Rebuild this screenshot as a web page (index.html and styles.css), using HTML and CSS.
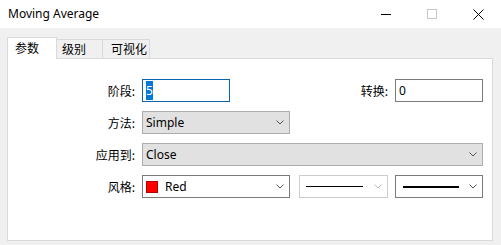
FILE: index.html
```html
<!DOCTYPE html>
<html lang="zh">
<head>
    <meta charset="UTF-8">
    <title>Moving Average</title>
    <link rel="stylesheet" href="styles.css">
</head>
<body>
    <div class="window">
        <div class="titlebar">
            <span class="title">Moving Average</span>
            <div class="caption">
                <div class="cap-btn">
                    <svg width="10" height="10" viewBox="0 0 10 10"><path d="M0 5.5H10" stroke="#000" stroke-width="1"/></svg>
                </div>
                <div class="cap-btn">
                    <svg width="10" height="10" viewBox="0 0 10 10"><rect x="0.5" y="0.5" width="9" height="9" fill="none" stroke="#c8c8c8" stroke-width="1"/></svg>
                </div>
                <div class="cap-btn">
                    <svg width="11" height="11" viewBox="0 0 11 11"><path d="M0.5 0.5L10.5 10.5M10.5 0.5L0.5 10.5" stroke="#000" stroke-width="1"/></svg>
                </div>
            </div>
        </div>

        <div class="client">
            <div class="tabs">
                <div class="tab tab-active">参数</div>
                <div class="tab tab-2">级别</div>
                <div class="tab tab-3">可视化</div>
            </div>

            <div class="panel">
                <div class="form">
                    <div class="label">阶段:</div>
                    <div class="cell">
                        <div class="edit edit-focus"><span class="sel">5</span></div>
                    </div>
                    <div class="label">转换:</div>
                    <div class="cell">
                        <div class="edit">0</div>
                    </div>

                    <div class="label">方法:</div>
                    <div class="cell">
                        <div class="combo combo-grey w-148">
                            <span>Simple</span>
                            <svg class="chev" width="8" height="5" viewBox="0 0 8 5"><path d="M0.5 0.5L4 4L7.5 0.5" fill="none" stroke="#555" stroke-width="1"/></svg>
                        </div>
                    </div>
                    <div></div>
                    <div></div>

                    <div class="label">应用到:</div>
                    <div class="cell span-3">
                        <div class="combo combo-grey">
                            <span>Close</span>
                            <svg class="chev" width="8" height="5" viewBox="0 0 8 5"><path d="M0.5 0.5L4 4L7.5 0.5" fill="none" stroke="#555" stroke-width="1"/></svg>
                        </div>
                    </div>

                    <div class="label">风格:</div>
                    <div class="cell">
                        <div class="combo w-148">
                            <span class="swatch"></span>
                            <span>Red</span>
                            <svg class="chev" width="8" height="5" viewBox="0 0 8 5"><path d="M0.5 0.5L4 4L7.5 0.5" fill="none" stroke="#555" stroke-width="1"/></svg>
                        </div>
                    </div>
                    <div class="cell">
                        <div class="combo combo-disabled w-89">
                            <span class="line line-thin"></span>
                            <svg class="chev" width="8" height="5" viewBox="0 0 8 5"><path d="M0.5 0.5L4 4L7.5 0.5" fill="none" stroke="#bbb" stroke-width="1"/></svg>
                        </div>
                    </div>
                    <div class="cell">
                        <div class="combo w-88">
                            <span class="line line-thick"></span>
                            <svg class="chev" width="8" height="5" viewBox="0 0 8 5"><path d="M0.5 0.5L4 4L7.5 0.5" fill="none" stroke="#555" stroke-width="1"/></svg>
                        </div>
                    </div>
                </div>
            </div>
        </div>
    </div>
</body>
</html>
```

FILE: styles.css
```css
body {
    margin: 0;
    width: 501px;
    height: 245px;
    overflow: hidden;
    background-color: #f0f0f0;
    font-family: "Noto Sans", "Noto Sans CJK SC", sans-serif;
    font-size: 12px;
    color: #000;
}
.window {
    display: flex;
    flex-direction: column;
    height: 245px;
}
.titlebar {
    height: 28px;
    background-color: #fff;
    display: flex;
    align-items: center;
    flex-shrink: 0;
}
.title {
    flex: 1;
    padding-left: 8px;
    font-size: 12px;
    color: #000;
    position: relative;
    top: -1px;
}
.caption {
    display: flex;
    height: 28px;
}
.cap-btn {
    width: 46px;
    height: 28px;
    display: flex;
    justify-content: center;
    align-items: center;
}
.client {
    flex: 1;
    display: flex;
    flex-direction: column;
    padding: 9px 8px 4px 7px;
}
.tabs {
    display: flex;
    height: 21px;
    align-items: flex-end;
}
.tab {
    box-sizing: border-box;
    height: 19px;
    line-height: 18px;
    border: 1px solid #d9d9d9;
    border-bottom: none;
    border-left: none;
    font-family: "Noto Sans CJK SC", sans-serif;
    font-size: 12px;
}
.tab-active {
    width: 50px;
    height: 22px;
    line-height: 19px;
    padding-left: 7px;
    margin-bottom: -1px;
    border-left: 1px solid #d9d9d9;
    background-color: #fff;
    position: relative;
    z-index: 1;
}
.tab-2 {
    width: 46px;
    padding-left: 5px;
}
.tab-3 {
    width: 47px;
    padding-left: 8px;
}
.panel {
    flex: 1;
    background-color: #fff;
    border: 1px solid #d9d9d9;
}
.form {
    display: grid;
    grid-template-columns: 134px 157px 96px 88px;
    grid-auto-rows: 23px;
    row-gap: 9px;
    padding-top: 20px;
}
.label {
    text-align: right;
    padding-right: 7px;
    line-height: 23px;
    font-family: "Noto Sans CJK SC", sans-serif;
    font-size: 12px;
}
.cell {
    display: flex;
}
.span-3 {
    grid-column: 2 / 5;
}
.edit {
    box-sizing: border-box;
    width: 88px;
    height: 23px;
    border: 1px solid #7a7a7a;
    background-color: #fff;
    padding-left: 3px;
    line-height: 21px;
}
.edit-focus {
    border-color: #0a64ad;
}
.sel {
    background-color: #0078d7;
    color: #fff;
    padding: 1px 0;
}
.combo {
    box-sizing: border-box;
    width: 100%;
    height: 23px;
    border: 1px solid #7a7a7a;
    background-color: #fff;
    display: flex;
    align-items: center;
    padding-left: 3px;
    padding-right: 5px;
}
.combo span {
    flex: none;
}
.combo-grey {
    background-color: #e1e1e1;
    border-color: #adadad;
}
.combo-disabled {
    border-color: #cccccc;
}
.chev {
    margin-left: auto;
    flex: none;
}
.w-148 { width: 148px; }
.w-89 { width: 89px; }
.w-88 { width: 88px; }
.swatch {
    box-sizing: border-box;
    width: 12px;
    height: 12px;
    background-color: #ff0000;
    border: 1px solid #b00000;
    margin-right: 7px;
}
.line {
    display: block;
    background-color: #000;
    margin-left: 3px;
}
.line-thin {
    width: 57px;
    height: 1px;
}
.line-thick {
    width: 56px;
    height: 2px;
    margin-left: 4px;
}
```
